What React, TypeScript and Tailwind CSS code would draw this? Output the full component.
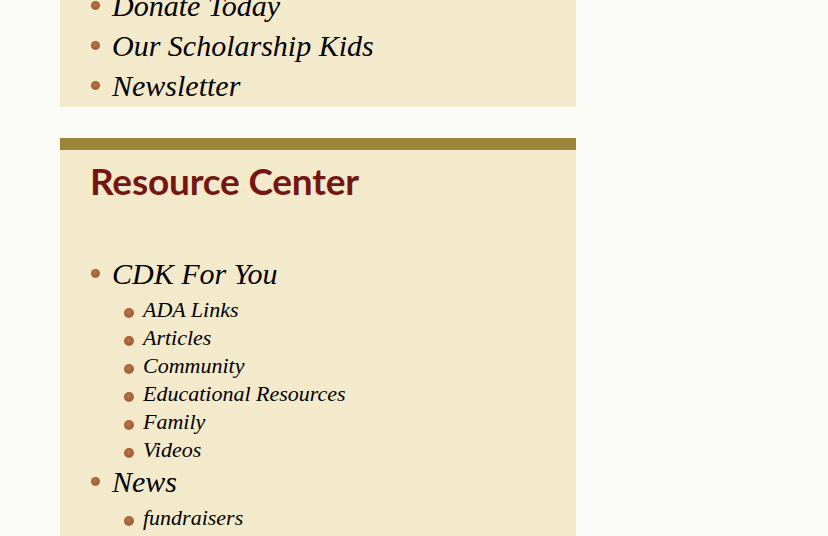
const serif = "font-['Liberation_Serif',serif] italic text-black";
const dot = "shrink-0 rounded-full bg-[radial-gradient(circle_at_45%_40%,#b8784a,#a25a33_60%,#d8b58f)]";

function MainItem({ label }: { label: string }) {
  return (
    <li className={`flex h-[40px] items-start gap-[12px] text-[30px] ${serif}`}>
      <span className={`mt-[14px] h-[9px] w-[9px] ${dot}`} />
      <span className="leading-[38px]">{label}</span>
    </li>
  );
}

function SubItem({ label }: { label: string }) {
  return (
    <li className={`flex h-[28px] items-start gap-[9px] pl-[33px] pt-[2px] text-[22px] ${serif}`}>
      <span className={`mt-[11px] h-[10px] w-[10px] ${dot}`} />
      <span className="leading-[26px]">{label}</span>
    </li>
  );
}

const resources = ["ADA Links", "Articles", "Community", "Educational Resources", "Family", "Videos"];

export default function App() {
  return (
    <div className="h-[536px] w-[828px] overflow-hidden bg-[#fafaf6]">
      <div className="ml-[60px] flex w-[516px] flex-col gap-[31px] -mt-[13px]">
        {/* Support list (scrolled) */}
        <div className="bg-[#f3e9cb]">
          <ul className="flex flex-col pl-[31px]">
            <MainItem label="Donate Today" />
            <MainItem label="Our Scholarship Kids" />
            <MainItem label="Newsletter" />
          </ul>
        </div>

        {/* Resource Center */}
        <div className="flex flex-col bg-[#f3e9cb] pb-[20px]">
          <div className="h-[12px] bg-[#9c8538]" />
          <h2 className="mt-[9px] pl-[30px] font-['Lato',sans-serif] text-[37px] font-bold leading-[44px] tracking-[-0.2px] text-[#741712]">
            Resource Center
          </h2>
          <ul className="mt-[52px] flex flex-col pl-[31px]">
            <MainItem label="CDK For You" />
            {resources.map((r) => (
              <SubItem key={r} label={r} />
            ))}
            <MainItem label="News" />
            <SubItem label="fundraisers" />
          </ul>
        </div>
      </div>
    </div>
  );
}
